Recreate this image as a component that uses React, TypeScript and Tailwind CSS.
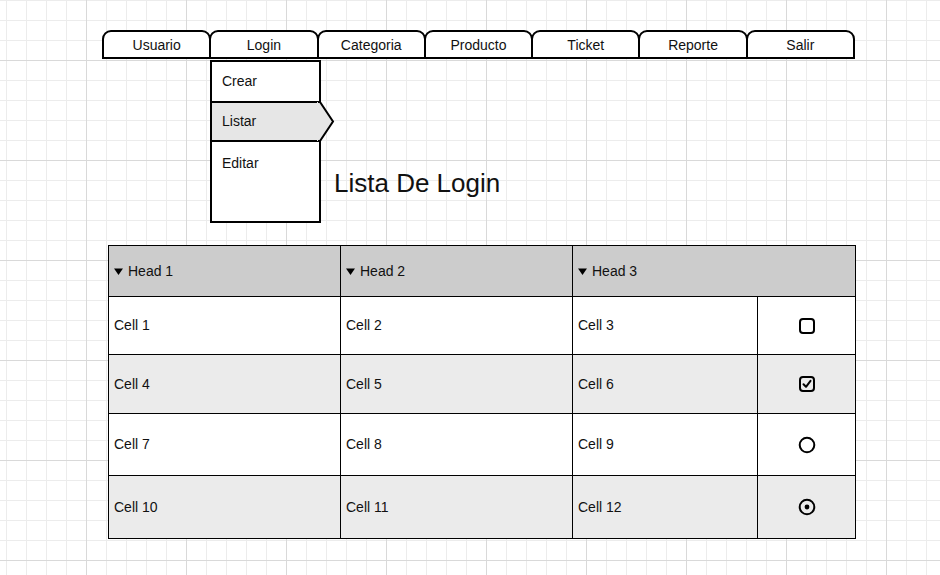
import React from 'react';

const tabs = ['Usuario', 'Login', 'Categoria', 'Producto', 'Ticket', 'Reporte', 'Salir'];

const rows = [
  { cells: ['Cell 1', 'Cell 2', 'Cell 3'], icon: 'box', h: 'h-[58px]', alt: false },
  { cells: ['Cell 4', 'Cell 5', 'Cell 6'], icon: 'check', h: 'h-[59px]', alt: true },
  { cells: ['Cell 7', 'Cell 8', 'Cell 9'], icon: 'radio', h: 'h-[62px]', alt: false },
  { cells: ['Cell 10', 'Cell 11', 'Cell 12'], icon: 'radioOn', h: 'h-[63px]', alt: true },
];

const Caret = () => (
  <svg width="9" height="7" viewBox="0 0 9 7" className="mr-[5px] shrink-0">
    <polygon points="0,0.5 9,0.5 4.5,7" fill="#000" />
  </svg>
);

const Control: React.FC<{ kind: string }> = ({ kind }) => {
  if (kind === 'box' || kind === 'check') {
    return (
      <svg width="18" height="18" viewBox="0 0 18 18">
        <rect x="2" y="2" width="14" height="14" rx="3" fill="none" stroke="#000" strokeWidth="2" />
        {kind === 'check' && (
          <path d="M5.5 9.2 L8 11.8 L12.5 5.8" fill="none" stroke="#000" strokeWidth="2" strokeLinecap="round" strokeLinejoin="round" />
        )}
      </svg>
    );
  }
  return (
    <svg width="18" height="18" viewBox="0 0 18 18">
      <circle cx="9" cy="9" r="7.3" fill="none" stroke="#000" strokeWidth="2" />
      {kind === 'radioOn' && <circle cx="9" cy="9" r="2.4" fill="#000" />}
    </svg>
  );
};

export default function App() {
  return (
    <div
      className="w-[940px] h-[575px] overflow-hidden bg-white text-[#111] font-['Liberation_Sans',Arial,sans-serif] bg-[linear-gradient(to_right,#d9d9d9_1px,transparent_1px),linear-gradient(to_bottom,#d9d9d9_1px,transparent_1px),linear-gradient(to_right,#ececec_1px,transparent_1px),linear-gradient(to_bottom,#ececec_1px,transparent_1px)] [background-size:100px_100px,100px_100px,20px_20px,20px_20px] [background-position:86px_0,0_60px,6px_0,0_0]"
    >
      {/* tab bar */}
      <div className="ml-[102px] mt-[30px] flex w-[753px]">
        {tabs.map((t, i) => (
          <div
            key={t}
            className={`flex-1 h-[29px] border-2 border-black rounded-t-[9px] bg-white flex items-center justify-center text-[14px] pt-[1px] ${i > 0 ? '-ml-[2px]' : ''}`}
          >
            {t}
          </div>
        ))}
      </div>

      {/* submenu + title */}
      <div className="flex items-start ml-[210px]">
        <div className="mt-[1px] w-[111px] border-2 border-black bg-white text-[14px] flex flex-col">
          <div className="h-[41px] border-b-2 border-black flex items-center pl-[10px]">Crear</div>
          <div className="relative h-[39px] border-b-2 border-black bg-[#e6e6e6] flex items-center pl-[10px]">
            Listar
            <svg width="18" height="41" viewBox="0 0 18 41" className="absolute left-[105px] top-[-2px]">
              <polygon points="0,1 3,1 16,20.5 3,40 0,40" fill="#e6e6e6" />
              <polyline points="1,1 3,1 16,20.5 3,40 1,40" fill="none" stroke="#000" strokeWidth="2" strokeLinejoin="miter" />
            </svg>
          </div>
          <div className="h-[79px] pl-[10px] pt-[11px] leading-[20px]">Editar</div>
        </div>
        <h1 className="ml-[13px] mt-[110px] text-[26px] leading-[28px] font-normal">Lista De Login</h1>
      </div>

      {/* table */}
      <div className="ml-[108px] mt-[22px] w-[748px] grid grid-cols-[232px_232px_185px_98px] border-l border-t border-black text-[14px]">
        {['Head 1', 'Head 2', 'Head 3'].map((h, i) => (
          <div
            key={h}
            className={`h-[51px] bg-[#cccccc] border-r border-b border-black flex items-center pl-[5px] ${i === 2 ? 'col-span-2' : ''}`}
          >
            <Caret />
            {h}
          </div>
        ))}
        {rows.map((r) => (
          <React.Fragment key={r.cells[0]}>
            {r.cells.map((c) => (
              <div
                key={c}
                className={`${r.h} border-r border-b border-black flex items-center pl-[5px] ${r.alt ? 'bg-[#ebebeb]' : 'bg-white'}`}
              >
                {c}
              </div>
            ))}
            <div className={`${r.h} border-r border-b border-black flex items-center justify-center ${r.alt ? 'bg-[#ebebeb]' : 'bg-white'}`}>
              <Control kind={r.icon} />
            </div>
          </React.Fragment>
        ))}
      </div>
    </div>
  );
}
